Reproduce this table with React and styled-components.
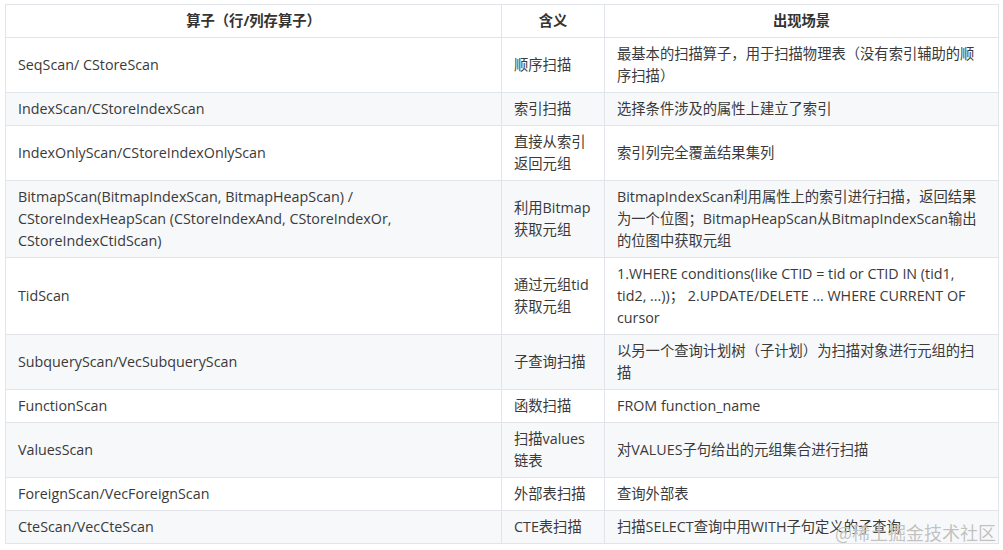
import styled, {createGlobalStyle} from "styled-components";

const rows = [
    {op: 'SeqScan/ CStoreScan', mean: '顺序扫描', scene: '最基本的扫描算子，用于扫描物理表（没有索引辅助的顺序扫描）'},
    {op: 'IndexScan/CStoreIndexScan', mean: '索引扫描', scene: '选择条件涉及的属性上建立了索引'},
    {op: 'IndexOnlyScan/CStoreIndexOnlyScan', mean: '直接从索引返回元组', scene: '索引列完全覆盖结果集列'},
    {
        op: 'BitmapScan(BitmapIndexScan, BitmapHeapScan) / CStoreIndexHeapScan (CStoreIndexAnd, CStoreIndexOr, CStoreIndexCtidScan)',
        mean: '利用Bitmap获取元组',
        scene: 'BitmapIndexScan利用属性上的索引进行扫描，返回结果为一个位图；BitmapHeapScan从BitmapIndexScan输出的位图中获取元组'
    },
    {
        op: 'TidScan',
        mean: '通过元组tid获取元组',
        scene: '1.WHERE conditions(like CTID = tid or CTID IN (tid1, tid2, ...))； 2.UPDATE/DELETE ... WHERE CURRENT OF cursor'
    },
    {op: 'SubqueryScan/VecSubqueryScan', mean: '子查询扫描', scene: '以另一个查询计划树（子计划）为扫描对象进行元组的扫描'},
    {op: 'FunctionScan', mean: '函数扫描', scene: 'FROM function_name'},
    {op: 'ValuesScan', mean: '扫描values链表', scene: '对VALUES子句给出的元组集合进行扫描'},
    {op: 'ForeignScan/VecForeignScan', mean: '外部表扫描', scene: '查询外部表'},
    {op: 'CteScan/VecCteScan', mean: 'CTE表扫描', scene: '扫描SELECT查询中用WITH子句定义的子查询'},
]

const App = () => {
    return (
        <>
            <GlobalStyle />
            <Wrapper>
                <Table>
                    <colgroup>
                        <col style={{width: 496}} />
                        <col style={{width: 103}} />
                        <col style={{width: 394}} />
                    </colgroup>
                    <thead>
                        <tr>
                            <HeadCell>算子（行/列存算子）</HeadCell>
                            <HeadCell>含义</HeadCell>
                            <HeadCell>出现场景</HeadCell>
                        </tr>
                    </thead>
                    <tbody>
                        {rows.map((row, i) => (
                            <Row key={row.op} $shaded={i % 2 === 1}>
                                <Cell>{row.op}</Cell>
                                <Cell>{row.mean}</Cell>
                                <Cell>{row.scene}</Cell>
                            </Row>
                        ))}
                    </tbody>
                </Table>
                <Watermark>@稀土掘金技术社区</Watermark>
            </Wrapper>
        </>
    )
}

export default App

const GlobalStyle = createGlobalStyle`
  body {
    margin: 0;
    background: #fff;
    font-family: "Open Sans", "Noto Sans CJK SC", sans-serif;
  }
`
const Wrapper = styled.div`
  position: relative;
  width: 1003px;
  height: 550px;
  padding: 4px 0 0 5px;
  box-sizing: border-box;
  overflow: hidden;
`
const Table = styled.table`
  border-collapse: collapse;
  table-layout: fixed;
  width: 993px;
  font-size: 14.3px;
  line-height: 22px;
  color: #3a3a3a;
`
const HeadCell = styled.th`
  border: 1px solid #e1e4e8;
  padding: 5px 12px;
  font-weight: bold;
  text-align: center;
  color: #333;
  background: #fff;
`
const Row = styled.tr`
  background: ${(p) => (p.$shaded ? '#f6f8fa' : '#fff')};
`
const Cell = styled.td`
  border: 1px solid #e1e4e8;
  padding: 5px 12px;
  vertical-align: middle;
  text-align: left;
  word-break: break-word;
`
const Watermark = styled.div`
  position: absolute;
  right: 7px;
  bottom: 6px;
  font-family: "Noto Sans CJK SC", sans-serif;
  font-size: 18px;
  line-height: 24px;
  color: rgba(140, 140, 140, 0.55);
  text-shadow: 0 0 1px #fff;
`
